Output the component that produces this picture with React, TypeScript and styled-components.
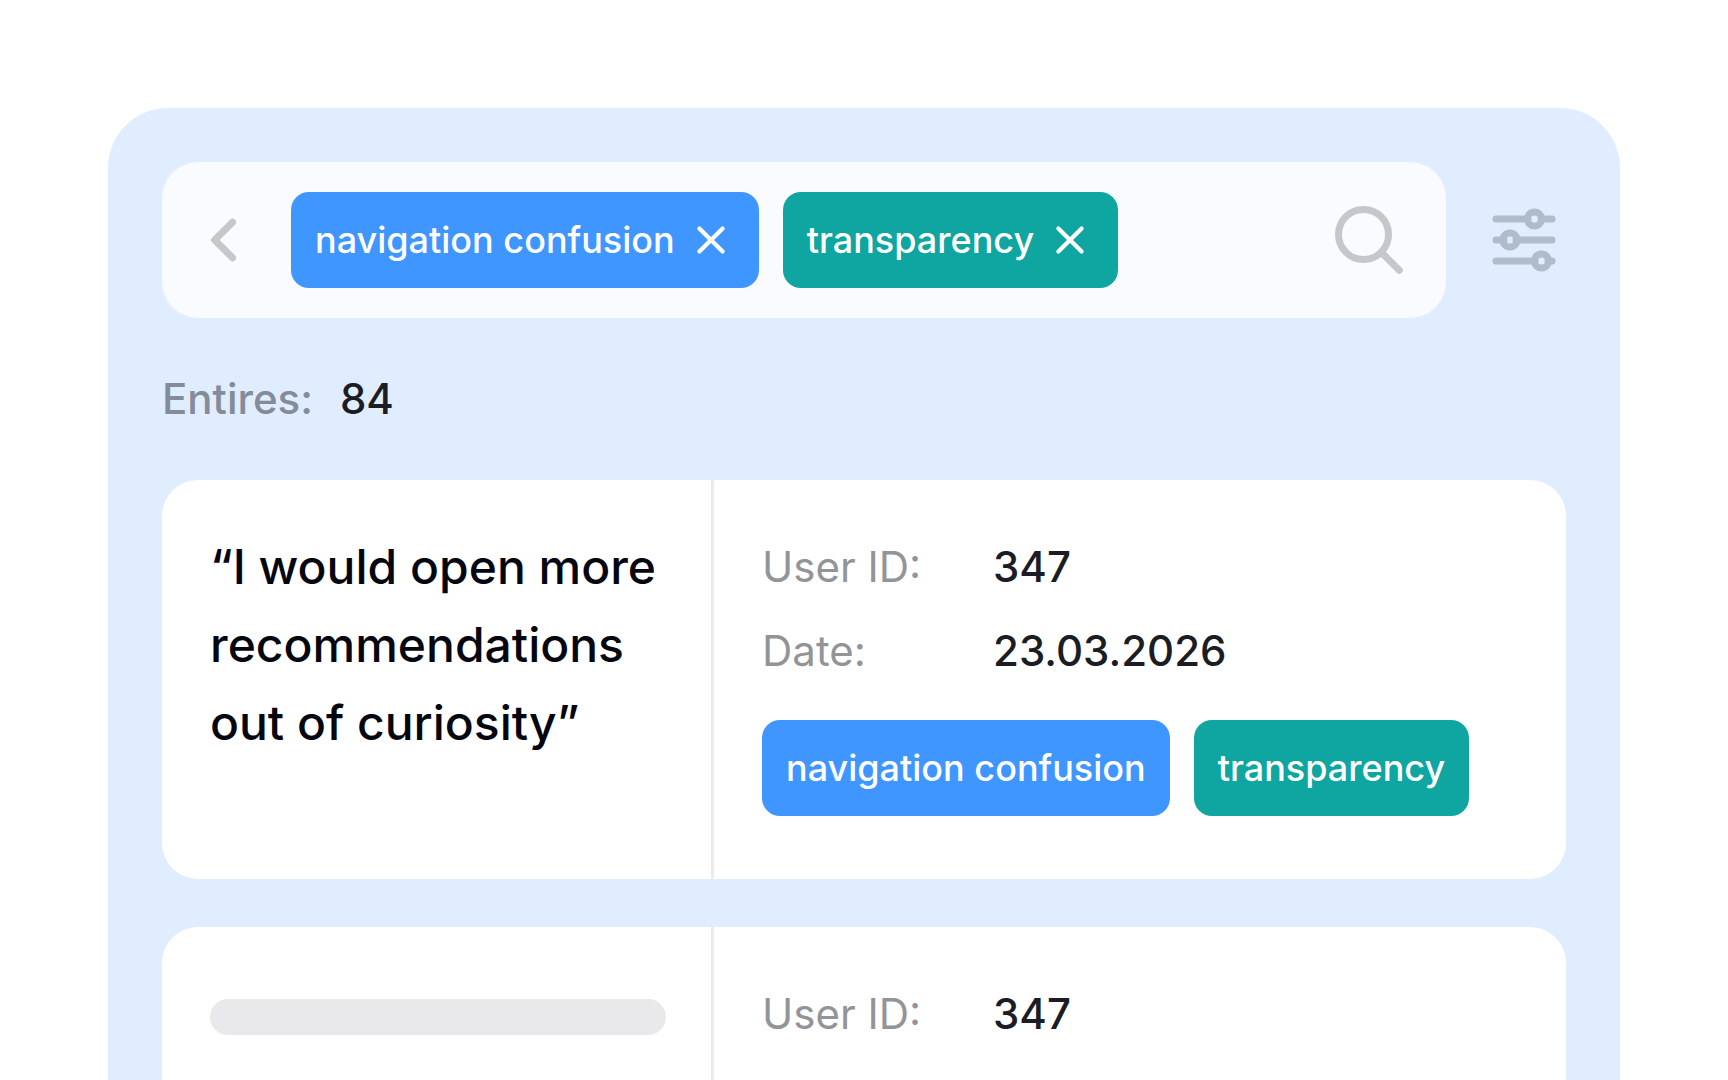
import React from "react";
import styled, { createGlobalStyle } from "styled-components";

const GlobalStyle = createGlobalStyle`
  *, *::before, *::after { box-sizing: border-box; }
  body {
    margin: 0;
    background: #ffffff;
    color: #1b1c24;
    font-family: Inter, "Liberation Sans", sans-serif;
  }
  h1, p, dl, dd, ul { margin: 0; padding: 0; }
`;

const tones = {
  blue: "#4096ff",
  teal: "#0fa5a0",
};

type Tone = keyof typeof tones;

const Page = styled.div`
  height: 100vh;
  padding: 108px 108px 0;
  overflow: hidden;
`;

const Panel = styled.main`
  display: flex;
  flex-direction: column;
  min-height: 100%;
  padding: 54px 54px 48px;
  border-radius: 60px 60px 0 0;
  background: #e0edff;
`;

const Toolbar = styled.div`
  display: flex;
  align-items: center;
  gap: 42px;
  padding-right: 6px;
`;

const SearchBar = styled.form`
  display: flex;
  flex: 1;
  align-items: center;
  min-width: 0;
  padding: 30px 42px 30px 36px;
  border-radius: 36px;
  background: #fafbff;
`;

const IconButton = styled.button<{ $size: number; $color: string }>`
  display: flex;
  flex: none;
  width: ${(p) => p.$size}px;
  height: ${(p) => p.$size}px;
  padding: 0;
  border: 0;
  background: none;
  color: ${(p) => p.$color};
  cursor: pointer;
`;

const TagList = styled.ul`
  display: flex;
  gap: 24px;
  list-style: none;
`;

const FilterTags = styled(TagList)`
  margin-left: 45px;
`;

const Tag = styled.li<{ $tone: Tone }>`
  display: flex;
  align-items: center;
  gap: 12px;
  padding: 24px;
  border-radius: 18px;
  background: ${(p) => tones[p.$tone]};
  color: #ffffff;
  font-size: 36px;
  font-weight: 500;
  line-height: 48px;
  white-space: nowrap;
`;

const SearchInput = styled.input`
  flex: 1;
  min-width: 0;
  height: 48px;
  margin: 0 24px;
  padding: 0;
  border: 0;
  outline: 0;
  background: none;
  color: inherit;
  font: inherit;
  font-size: 36px;
`;

const Summary = styled.p`
  display: flex;
  gap: 27px;
  padding: 42px 0;
  font-size: 42px;
  font-weight: 500;
  line-height: 78px;
`;

const SummaryLabel = styled.span`
  color: #848b99;
`;

const Entries = styled.div`
  display: flex;
  flex-direction: column;
  gap: 48px;
`;

const Card = styled.article`
  display: grid;
  grid-template-columns: 552px 1fr;
  border-radius: 36px;
  background: #ffffff;
`;

const QuoteCell = styled.div`
  padding: 48px 45px 48px 48px;
  border-right: 3px solid #ececed;
`;

const Quote = styled.p`
  color: #05060f;
  font-size: 48px;
  font-weight: 500;
  line-height: 78px;
`;

const Skeleton = styled.div`
  height: 36px;
  margin-top: 24px;
  border-radius: 18px;
  background: #e9e9eb;
`;

const Details = styled.div`
  display: flex;
  flex-direction: column;
  gap: 30px;
  padding: 48px 48px 63px;
`;

const Fields = styled.dl`
  display: grid;
  grid-template-columns: 231px 1fr;
  row-gap: 6px;
  font-size: 42px;
  line-height: 78px;
`;

const FieldLabel = styled.dt`
  color: #939498;
`;

const FieldValue = styled.dd`
  font-weight: 500;
`;

const BackIcon = () => (
  <svg width="48" height="48" viewBox="0 0 48 48" fill="none" aria-hidden="true">
    <path d="M34.5 6.2 16.7 24 34.5 41.8" stroke="currentColor" strokeWidth="7" strokeLinecap="round" strokeLinejoin="round" />
  </svg>
);

const CloseIcon = () => (
  <svg width="48" height="48" viewBox="0 0 48 48" fill="none" aria-hidden="true">
    <path d="M12.4 12.4 35.6 35.6M35.6 12.4 12.4 35.6" stroke="currentColor" strokeWidth="4.2" strokeLinecap="round" />
  </svg>
);

const SearchIcon = () => (
  <svg width="72" height="72" viewBox="0 0 72 72" fill="none" stroke="currentColor" strokeWidth="7" aria-hidden="true">
    <circle cx="31.5" cy="30.5" r="25" />
    <path d="M50 49 67.3 66.3" strokeLinecap="round" />
  </svg>
);

const SlidersIcon = () => (
  <svg width="72" height="72" viewBox="0 0 72 72" fill="none" stroke="currentColor" strokeWidth="7" strokeLinecap="round" aria-hidden="true">
    <path d="M8 15H40M53 15H64M8 36H16M28 36H64M8 57H47M60 57H64" />
    <circle cx="46.5" cy="15" r="7.1" />
    <circle cx="22" cy="36" r="7.1" />
    <circle cx="53.5" cy="57" r="7.1" />
  </svg>
);

const tags: { name: string; tone: Tone }[] = [
  { name: "navigation confusion", tone: "blue" },
  { name: "transparency", tone: "teal" },
];

interface Entry {
  quote?: string;
  fields: [string, string][];
  tagged: boolean;
}

const entries: Entry[] = [
  {
    quote: "“I would open more recommendations out of curiosity”",
    fields: [
      ["User ID:", "347"],
      ["Date:", "23.03.2026"],
    ],
    tagged: true,
  },
  { fields: [["User ID:", "347"]], tagged: false },
];

export default function App() {
  return (
    <>
      <GlobalStyle />
      <Page>
        <Panel>
          <Toolbar>
            <SearchBar role="search" onSubmit={(e) => e.preventDefault()}>
              <IconButton type="button" aria-label="Back" $size={48} $color="#c6c7cb">
                <BackIcon />
              </IconButton>
              <FilterTags>
                {tags.map((tag) => (
                  <Tag key={tag.name} $tone={tag.tone}>
                    {tag.name}
                    <IconButton type="button" aria-label={`Remove ${tag.name}`} $size={48} $color="#ffffff">
                      <CloseIcon />
                    </IconButton>
                  </Tag>
                ))}
              </FilterTags>
              <SearchInput type="text" aria-label="Search entries" />
              <IconButton type="submit" aria-label="Search" $size={72} $color="#c6c7cb">
                <SearchIcon />
              </IconButton>
            </SearchBar>
            <IconButton type="button" aria-label="Filters" $size={72} $color="#b0bcca">
              <SlidersIcon />
            </IconButton>
          </Toolbar>
          <Summary>
            <SummaryLabel>Entires:</SummaryLabel>
            <span>84</span>
          </Summary>
          <Entries>
            {entries.map((entry, index) => (
              <Card key={index}>
                <QuoteCell>{entry.quote ? <Quote>{entry.quote}</Quote> : <Skeleton />}</QuoteCell>
                <Details>
                  <Fields>
                    {entry.fields.map(([label, value]) => (
                      <React.Fragment key={label}>
                        <FieldLabel>{label}</FieldLabel>
                        <FieldValue>{value}</FieldValue>
                      </React.Fragment>
                    ))}
                  </Fields>
                  {entry.tagged && (
                    <TagList>
                      {tags.map((tag) => (
                        <Tag key={tag.name} $tone={tag.tone}>
                          {tag.name}
                        </Tag>
                      ))}
                    </TagList>
                  )}
                </Details>
              </Card>
            ))}
          </Entries>
        </Panel>
      </Page>
    </>
  );
}
